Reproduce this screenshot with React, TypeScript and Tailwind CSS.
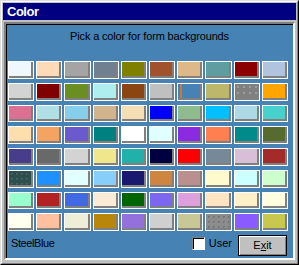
const ROWS: string[][] = [
  ["bg-[#f0f8ff]", "bg-[#ffdab9]", "bg-[#a4a4a4]", "bg-[#708090]", "bg-[#808000]", "bg-[#a0522d]", "bg-[#deb887]", "bg-[#5f9ea0]", "bg-[#8b0000]", "bg-[#b0c4de]"],
  ["bg-[#d3d3d3]", "bg-[#800000]", "bg-[#6b8e23]", "bg-[#afeeee]", "bg-[#8b4513]", "bg-[#c0c0c0]", "bg-[#4682b4]", "bg-[#bdb76b]", "bg-[#808080]", "bg-[#ffa500]"],
  ["bg-[#db7093]", "bg-[#b0e0e6]", "bg-[#87ceeb]", "bg-[#d2b48c]", "bg-[#f5deb3]", "bg-[#0000ff]", "bg-[#8fbc8f]", "bg-[#00bfff]", "bg-[#add8e6]", "bg-[#48d1cc]"],
  ["bg-[#ffdead]", "bg-[#f4a460]", "bg-[#6a5acd]", "bg-[#008080]", "bg-[#ffffff]", "bg-[#e0ffff]", "bg-[#8a2be2]", "bg-[#ff7f50]", "bg-[#008b8b]", "bg-[#556b2f]"],
  ["bg-[#483d8b]", "bg-[#696969]", "bg-[#d3d3d3]", "bg-[#f0e68c]", "bg-[#20b2aa]", "bg-[#000040]", "bg-[#ff0000]", "bg-[#778899]", "bg-[#d8bfd8]", "bg-[#a52a2a]"],
  ["bg-[#2f4f4f]", "bg-[#1e90ff]", "bg-[#e0ffff]", "bg-[#87cefa]", "bg-[#191970]", "bg-[#cd853f]", "bg-[#bc8f8f]", "bg-[#fffacd]", "bg-[#ccffff]", "bg-[#ccffcc]"],
  ["bg-[#99ffcc]", "bg-[#b22222]", "bg-[#4169e1]", "bg-[#faebd7]", "bg-[#006400]", "bg-[#7b68ee]", "bg-[#dda0dd]", "bg-[#ffe4c4]", "bg-[#fff0c8]", "bg-[#ffffe0]"],
  ["bg-[#fffff0]", "bg-[#ffc0a0]", "bg-[#eeeed8]", "bg-[#b8860b]", "bg-[#9370db]", "bg-[#d0d0d0]", "bg-[#c8c896]", "bg-[#8c8c8c]", "bg-[#8a5cff]", "bg-[#c8c84c]"],
];

// cells that show a visible dot pattern in the original
const DOTTED: Record<string, string> = {
  "1-8": "bg-[radial-gradient(#9c9c9c_1px,transparent_1px)] bg-[length:6px_6px]",
  "5-0": "bg-[radial-gradient(#466464_1px,transparent_1px)] bg-[length:5px_5px]",
  "7-7": "bg-[radial-gradient(#747474_1px,transparent_1px)] bg-[length:5px_5px]",
};

function Swatch({ color, extra, selected }: { color: string; extra?: string; selected?: boolean }) {
  return (
    <div className={`relative border border-white shadow-[inset_-2px_-2px_0_#808080] ${color} ${extra ?? ""}`}>
      {selected && <div className="absolute left-[2px] top-0 bottom-[2px] w-[2px] bg-[#d2782c]" />}
    </div>
  );
}

export default function App() {
  return (
    <div
      className="flex h-[265px] w-[299px] flex-col border border-t-[#dfdfdf] border-l-[#dfdfdf] border-r-black border-b-black bg-[#c0c0c0] text-black"
      style={{ fontFamily: '"Liberation Sans", Arial, sans-serif' }}
    >
      <div className="flex flex-1 flex-col border border-t-white border-l-white border-r-[#808080] border-b-[#808080] px-[1px] pt-[1px]">
        <div className="flex h-[17px] items-center bg-[#000080] pl-[4px] text-[13px] font-bold tracking-[-0.5px] text-white">
          Color
        </div>

        <div className="mx-[1px] mt-[2px] mb-[3px] flex flex-1 flex-col border-2 border-t-[#808080] border-l-[#808080] border-r-white border-b-white">
          <div className="flex flex-1 flex-col bg-[#4682b4] shadow-[inset_1px_1px_0_#000000]">
            <p className="mt-[6px] text-center text-[11px] leading-[13px] tracking-[-0.15px]">
              Pick a color for form backgrounds
            </p>

            <div className="ml-[2px] mt-[18px] grid h-[170px] w-[280px] grid-cols-10 grid-rows-8 gap-x-[2px] gap-y-[4px]">
              {ROWS.map((row, r) =>
                row.map((c, i) => (
                  <Swatch key={`${r}-${i}`} color={c} extra={DOTTED[`${r}-${i}`]} selected={r === 1 && i === 6} />
                )),
              )}
            </div>

            <div className="mt-[4px] flex h-[21px] items-start">
              <span className="ml-[5px] mt-[2px] text-[11px] leading-[13px] tracking-[-0.4px]">SteelBlue</span>
              <label className="ml-auto mt-[2px] flex items-center">
                <span className="h-[13px] w-[13px] border border-t-[#808080] border-l-[#808080] border-r-white border-b-white bg-white shadow-[inset_1px_1px_0_#000000]" />
                <span className="ml-[4px] text-[11px] leading-[13px]">User</span>
              </label>
              <button className="ml-[6px] mr-[6px] flex h-[21px] w-[49px] items-center justify-center border border-black bg-[#c0c0c0] text-[11px] leading-[13px] shadow-[inset_1px_1px_0_#ffffff,inset_-1px_-1px_0_#808080]">
                E<span className="underline">x</span>it
              </button>
            </div>
          </div>
        </div>
      </div>
    </div>
  );
}
